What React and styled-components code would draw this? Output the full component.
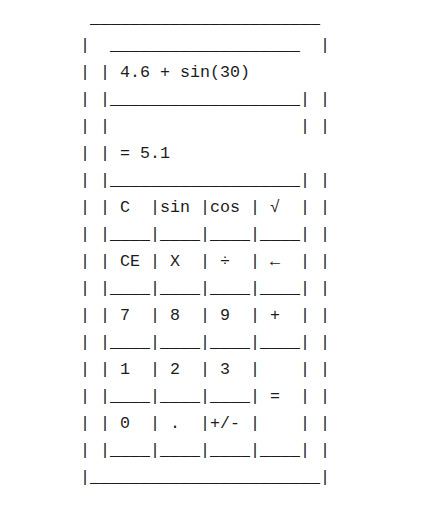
import React from 'react'
import styled, { createGlobalStyle } from 'styled-components'

const GlobalStyle = createGlobalStyle`
  html, body {
    margin: 0;
    background: #fff;
  }
`

const Page = styled.div`
  padding: 5px 0 0 80px;
`

const Art = styled.div`
  font-family: "Liberation Mono", "DejaVu Sans Mono", monospace;
  font-size: 16.66px;
  line-height: 27px;
  color: #1c1c1c;
`

const Line = styled.div`
  white-space: pre;
  height: 27px;
`

const expression = '4.6 + sin(30)'
const result = '= 5.1'

const keyRows = [
  { keys: [' C  ', 'sin ', 'cos ', ' √  '], base: '____|____|____|____' },
  { keys: [' CE ', ' X  ', ' ÷  ', ' ←  '], base: '____|____|____|____' },
  { keys: [' 7  ', ' 8  ', ' 9  ', ' +  '], base: '____|____|____|____' },
  { keys: [' 1  ', ' 2  ', ' 3  ', '    '], base: '____|____|____| =  ' },
  { keys: [' 0  ', ' .  ', '+/- ', '    '], base: '____|____|____|____' },
]

const bar = n => '_'.repeat(n)

const App = () => {
  const lines = [
    ' ' + bar(23),
    '|  ' + bar(19) + '  |',
    '| | ' + expression,
    '| |' + bar(19) + '| |',
    '| |' + ' '.repeat(19) + '| |',
    '| | ' + result,
    '| |' + bar(19) + '| |',
  ]
  keyRows.forEach(row => {
    lines.push('| |' + row.keys.join('|') + '| |')
    lines.push('| |' + row.base + '| |')
  })
  lines.push('|' + bar(23) + '|')

  return (
    <Page>
      <GlobalStyle />
      <Art>
        {lines.map((text, i) => (
          <Line key={i}>{text}</Line>
        ))}
      </Art>
    </Page>
  )
}

export default App
